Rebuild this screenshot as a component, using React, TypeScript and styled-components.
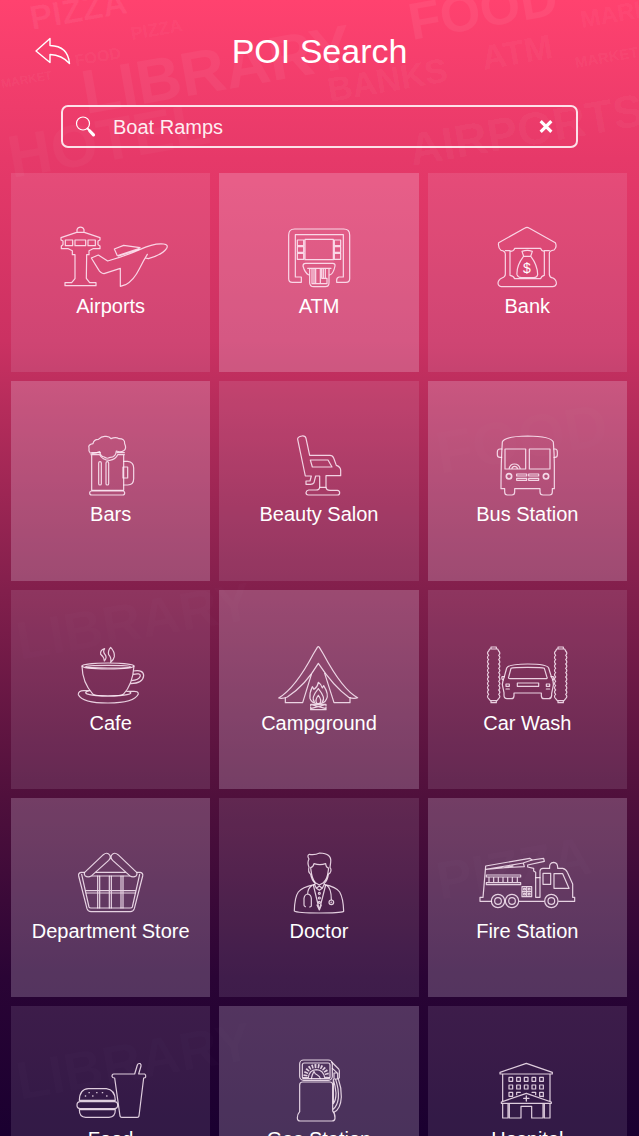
import React, { useState } from 'react';
import styled, { createGlobalStyle } from 'styled-components';

const GlobalStyle = createGlobalStyle`
  * { box-sizing: border-box; }
  body {
    margin: 0;
    background: #1c0030;
    color: #fff;
    font-family: "Liberation Sans", Arial, Helvetica, sans-serif;
  }
`;

const Screen = styled.div`
  position: relative;
  display: flex;
  flex-direction: column;
  height: 100vh;
  overflow: hidden;
  background: linear-gradient(
    180deg,
    #ff426f 0%,
    #e63969 14%,
    #cb3162 30%,
    #b52c5b 36%,
    #821f4c 52%,
    #50103c 70%,
    #2a0435 86%,
    #1a0030 100%
  );
`;

const Watermark = styled.svg`
  position: absolute;
  inset: 0;
  width: 100%;
  height: 100%;
  pointer-events: none;
  fill: #fff;
  font-family: "Liberation Sans", Arial, sans-serif;
  font-weight: 700;
`;

const Header = styled.header`
  position: relative;
  display: grid;
  grid-template-columns: 72px 1fr 72px;
  align-items: center;
  padding-top: 31px;
`;

const BackButton = styled.button`
  display: flex;
  justify-content: flex-end;
  padding: 0;
  border: 0;
  background: none;
  color: inherit;
  cursor: pointer;
`;

const Title = styled.h1`
  margin: 0;
  font-size: 34px;
  line-height: 40px;
  font-weight: 400;
  text-align: center;
`;

const SearchBox = styled.form`
  position: relative;
  flex: none;
  display: flex;
  align-items: center;
  height: 43px;
  margin: 34px 61px 25px;
  padding: 0 23px 0 12px;
  border: 2px solid rgba(255, 255, 255, 0.85);
  border-radius: 7px;
`;

const SearchLabel = styled.label`
  display: flex;
  width: 38px;
`;

const SearchInput = styled.input`
  flex: 1;
  min-width: 0;
  padding: 0;
  border: 0;
  outline: 0;
  background: none;
  color: rgba(255, 255, 255, 0.92);
  font: inherit;
  font-size: 20px;
  line-height: 24px;
`;

const ClearButton = styled.button`
  display: flex;
  padding: 0;
  border: 0;
  background: none;
  color: inherit;
  cursor: pointer;
`;

const Grid = styled.main`
  position: relative;
  flex: 1;
  min-height: 0;
  display: grid;
  grid-template-columns: repeat(3, 1fr);
  align-content: start;
  gap: 9px;
  padding: 0 12px 9px 11px;
  overflow-y: auto;
  scrollbar-width: none;
`;

const Tile = styled.button<{ $light: boolean }>`
  display: flex;
  flex-direction: column;
  align-items: center;
  justify-content: flex-start;
  gap: 5px;
  aspect-ratio: 1;
  padding: 52px 0 0;
  border: 0;
  background: rgba(250, 236, 255, ${(p) => (p.$light ? 0.21 : 0.11)});
  color: inherit;
  font: inherit;
  font-size: 20px;
  line-height: 24px;
  white-space: nowrap;
  cursor: pointer;
`;

const TileIcon = styled.svg`
  flex: none;
  width: 120px;
  height: 64px;
  overflow: visible;
  fill: none;
  stroke: rgba(255, 240, 250, 0.84);
  stroke-width: 3.6;
  stroke-linejoin: round;
  stroke-linecap: round;
`;

const LineIcon = styled.svg`
  display: block;
  fill: none;
  stroke: currentColor;
  stroke-linejoin: round;
  stroke-linecap: round;
`;

const brush = (x: number) => {
  const left = 'q-7 -7 0 -13'.concat(' q-7 -7 0 -13'.repeat(10));
  const right = 'q7 7 0 13'.concat(' q7 7 0 13'.repeat(10));
  return `M${x + 8} 41 H${x + 32} L${x + 35} 47 ${right} L${x + 30} 196 H${x + 10} L${x + 5} 190 ${left} Z M${x + 12} 41 V35 H${x + 28} V41 M${x + 12} 196 V202 H${x + 28} V196`;
};

type Place = { name: string; x: number; y: number; art: React.ReactNode };

const places: Place[] = [
  {
    name: 'Airports', x: 122, y: 45,
    art: (
      <>
        <path d="M200 67 V59 A11 11 0 0 1 221 59 V67 M152 83 L199 67 H222 L269 83 V90 L263 93 V104 L269 108 V116 H248 L236 122 V134 H229 L228 205 L238 218 H257 V227 H164 V218 H184 L194 206 V134 H186 V122 L174 116 H153 V108 L158 104 V93 L152 90 Z" />
        <path d="M165 90 h22 v17 h-22z M194 90 h32 v17 h-32z M233 90 h22 v17 h-22z" />
        <path d="M243 144 L264 135 L292 153 Q345 138 388 119 Q430 99 460 102 Q475 104 469 115 Q456 134 414 146 L405 144 M411 133 Q400 150 388 175 Q370 212 346 224 L330 229 V175 L281 191 Q270 190 264 178 L243 144 M321 137 L312 117 L340 106 L389 113" />
        <path d="M325 137 L386 117" strokeWidth="6" />
      </>
    ),
  },
  {
    name: 'ATM', x: 120, y: 45,
    art: (
      <>
        <path d="M247 201 H229 V74 H373 V201 H360 Q353 203 353 210 V217 H381 Q392 217 392 206 V75 Q392 57 374 57 H227 Q209 57 209 75 V206 Q209 217 220 217 H247 Z" />
        <path d="M258 88 H343 V149 H258 Z M235 90 h19 v17 h-19z M235 110 h19 v17 h-19z M235 130 h19 v18 h-19z M346 90 h19 v17 h-19z M346 110 h19 v17 h-19z M346 130 h19 v18 h-19z" />
        <path d="M270 195 Q258 190 252 168 Q252 160 260 160 H341 Q349 160 348 168 Q343 192 332 195 M266 175 H336 M272 175 V219 Q273 230 284 230 H319 Q330 230 330 219 V175 M279 175 V221 H324 V205 M285 175 V219 M290 175 V219 M304 175 V220 M308 175 V205 H324 M313 175 V203 M319 175 V203" />
      </>
    ),
  },
  {
    name: 'Bank', x: 745, y: 45,
    art: (
      <>
        <path d="M840 98 L919 54 Q925 50 931 54 L1010 98 Q1016 112 1006 120 Q992 122 992 130 V194 Q993 203 1003 204 Q1014 210 1013 222 Q1010 230 1002 230 H848 Q838 228 838 219 Q839 209 850 204 Q860 201 860 193 V132 Q859 122 847 121 Q837 112 840 98 Z" />
        <path d="M888 115 H966 Q968 123 977 124 V196 Q968 198 966 206 H888 Q885 198 874 196 V124 Q886 124 888 115 Z M992 122 H977 M860 122 H874" />
        <path d="M910 124 Q926 118 941 124 L936 139 H915 Z M914 140 Q893 168 895 194 Q898 203 908 203 H945 Q956 202 957 193 Q956 165 937 140" />
        <text x="925" y="188" textAnchor="middle" fontSize="42" fill="#fff" stroke="none">$</text>
      </>
    ),
  },
  {
    name: 'Bars', x: -58, y: 25,
    art: (
      <>
        <path d="M60 85 Q54 78 56 70 Q52 60 68 57 Q70 44 84 44 Q94 34 105 35 Q117 34 122 42 Q136 36 146 42 Q164 42 163 57 Q170 72 160 78 Q150 84 138 79 Q136 98 120 98 Q110 104 102 97 Q90 96 88 81 Q72 88 60 85 Z" />
        <path d="M64 90 V197 H160 V90 M62 90 H88 Q96 106 118 107 Q136 104 142 90 H162 M64 84 H90 M140 84 H162" />
        <rect x="58" y="199" width="105" height="12" rx="6" />
        <path d="M160 110 H172 Q190 112 190 130 V162 Q190 180 172 181 H160 M158 127 H172 V160 H158 Z" />
        <rect x="85" y="111" width="8" height="70" rx="4" />
        <rect x="107" y="111" width="8" height="70" rx="4" />
      </>
    ),
  },
  {
    name: 'Beauty Salon', x: 567, y: 25,
    art: (
      <>
        <path d="M683 44 Q682 36 696 34 Q706 33 708 41 L719 92 H780 Q788 92 791 100 L799 122 Q811 126 812 136 V153 H768 V186 Q768 197 780 197 H802 Q809 198 809 204 Q809 211 802 211 H715 Q708 210 708 204 Q709 197 716 196 H738 Q749 196 749 186 V154 H737 L732 174 Q729 179 722 179 H708 V169 H720 L724 154 H706 Z" />
        <path d="M721 106 H774 L786 127 H727 Z M749 188 H768" />
      </>
    ),
  },
  {
    name: 'Bus Station', x: -8, y: 25,
    art: (
      <>
        <path d="M98 52 Q104 35 174 34 Q244 35 251 52 Q254 90 254 120 V192 H248 V202 Q248 211 240 211 H220 Q211 211 211 202 V192 H135 V202 Q135 211 127 211 H113 Q105 211 105 202 V192 H94 Q94 110 98 52 Z" />
        <path d="M97 73 H91 Q83 73 83 82 V90 Q83 98 91 98 H96 M252 73 H256 Q263 73 263 82 V90 Q263 98 256 98 H253 M106 73 H168 V133 H106 Z M179 73 H241 V133 H179 Z M118 133 Q121 118 134 118 Q148 118 152 133 M126 133 Q128 125 135 125 Q142 125 144 133" />
        <circle cx="118" cy="155" r="8" strokeWidth="5" />
        <circle cx="229" cy="155" r="8" strokeWidth="5" />
        <path d="M141 148h30v6h-30z M177 148h30v6h-30z M141 161h30v6h-30z M177 161h30v6h-30z" />
      </>
    ),
  },
  {
    name: 'Cafe', x: -28, y: 20,
    art: (
      <>
        <ellipse cx="143" cy="92" rx="78" ry="9" />
        <ellipse cx="143" cy="94" rx="67" ry="4" />
        <path d="M65 92 Q66 142 98 177 Q105 182 143 182 Q183 182 189 177 Q217 148 221 92 M219 107 Q250 102 250 121 Q248 144 211 145 M218 117 Q241 112 240 122 Q236 134 213 136" />
        <path d="M88 166 H70 Q53 166 54 178 Q66 203 143 203 Q222 203 234 176 Q234 167 218 168 H199 M88 166 Q64 172 88 178 Q100 182 143 182 Q186 182 200 178 Q220 174 205 168" />
        <path d="M133 40 Q119 44 121 57 Q131 65 132 77 Q142 66 133 56 Q127 49 133 40 Z M151 36 Q164 50 162 64 Q160 74 151 81 Q154 68 145 58 Q142 46 151 36 Z" />
      </>
    ),
  },
  {
    name: 'Campground', x: 597, y: 20,
    art: (
      <>
        <path d="M772 36 Q775 32 778 36 L790 56 Q848 164 893 187 Q882 192 866 186 Q820 152 775 84 Q736 150 682 185 Q668 191 656 188 Q706 158 760 56 Z" />
        <path d="M754 118 L728 202 H676 V188 M794 114 L822 202 H870 V187" />
        <path d="M775 141 Q785 148 787 158 L791 151 Q808 178 799 192 Q794 205 775 205 Q754 204 750 189 Q748 172 757 154 L762 162 Q773 154 775 141 Z M775 160 Q798 188 787 200 M775 160 Q752 188 763 200 M775 180 Q786 194 780 203 M775 180 Q764 194 770 203" />
        <path d="M752 207 L798 220 M798 207 L752 220 M752 207 H798 V212 M752 212 V207 M752 216 V223 H798 V216" />
      </>
    ),
  },
  {
    name: 'Car Wash', x: -8, y: 20,
    art: (
      <>
        <path d={brush(52)} />
        <path d={brush(253)} />
        <path d="M111 98 Q116 86 174 86 Q232 86 237 98 L245 124 Q252 134 251 150 L246 174 V180 Q245 190 237 190 H223 Q215 190 215 181 V173 H133 V181 Q133 190 125 190 H112 Q103 190 103 180 V172 L98 148 Q99 136 104 124 Z" />
        <path d="M124 99 Q130 96 174 96 Q218 96 224 99 L232 126 Q234 130 228 130 H121 Q115 130 117 125 Z M104 124 H97 Q95 132 101 134 M244 124 H251 Q255 132 248 134 M143 143 h64 v10 h-64z M109 146 h10 v7 h-10z M230 146 h10 v7 h-10z M109 161 h10 M230 161 h10" />
      </>
    ),
  },
  {
    name: 'Department Store', x: 92, y: 15,
    art: (
      <>
        <path d="M193 82 L249 29 Q260 20 268 30 Q273 38 265 46 L214 92 Q203 99 194 92 Q190 87 193 82 Z M349 82 L293 29 Q282 20 274 30 Q269 38 277 46 L328 92 Q339 99 348 92 Q352 87 349 82 Z" />
        <path d="M192 82 H182 Q173 84 175 93 L200 191 Q203 200 212 200 H330 Q339 200 342 191 L367 93 Q369 84 360 82 H350 M184 88 L206 186 Q207 189 212 189 H330 Q335 189 336 186 L358 88 M227 82 H315 M215 93 H327" />
        <path d="M232 93 V189 M238 93 V189 M267 93 V189 M273 93 V189 M302 93 V189 M308 93 V189 M197 137 H345 M198 144 H344" />
      </>
    ),
  },
  {
    name: 'Doctor', x: 717, y: 15,
    art: (
      <>
        <path d="M867 67 Q861 52 867 42 Q860 32 868 28 Q884 31 899 24 Q936 25 932 52 L930 67 Q936 74 930 84 L925 88 Q923 106 912 116 L914 119 Q948 126 959 141 Q970 160 971 199 Q960 204 897 204 Q832 204 823 198 Q824 156 835 141 Q846 127 882 119 L886 116 Q875 105 872 88 Q863 80 867 67 Z" />
        <path d="M873 76 L872 68 Q880 66 882 56 Q900 62 917 56 Q918 68 926 69 L924 82 Q922 102 910 113 L898 120 L886 113 Q876 102 873 76 Z" />
        <path d="M880 120 L898 195 L917 120 M884 119 L889 130 L898 123 L907 130 L912 119 M889 130 L898 136 L907 130 M891 180 L898 195 L904 180" />
        <path d="M875 122 Q863 130 863 147 M856 185 Q851 183 852 178 V160 Q854 148 863 147 Q873 149 874 160 V180 Q875 185 869 186 M920 121 Q934 130 934 164" />
        <circle cx="934" cy="172" r="7" />
        <circle cx="934" cy="172" r="1" />
        <circle cx="898" cy="145" r="3" />
        <circle cx="898" cy="159" r="3" />
        <circle cx="898" cy="172" r="3" />
      </>
    ),
  },
  {
    name: 'Fire Station', x: -8, y: 15,
    art: (
      <>
        <path d="M66 169 H31 V157 H40 L46 88 L48 63 L180 40 L187 45 L222 40 L224 49 L174 60 V66 L192 70 V78 L198 82 V157 H211 V79 Q211 70 220 70 H240 Q238 53 252 52 Q265 53 264 70 H279 Q289 72 293 82 L309 117 V157 H315 V169 H267 M223 169 H149" />
        <path d="M49 73 L161 54 L164 65 L105 68 L130 63 M49 73 L105 68 M187 45 L160 54 M50 90 H153 V96 H50 Z M50 113 H153 V119 H50 Z M58 96 V113 M72 96 V113 M86 96 V113 M100 96 V113 M114 96 V113 M128 96 V113 M143 96 V113 M198 98 H211 M157 125 H186 V155 H157 Z M171 125 V155 M157 140 H186 M162 130h5v5h-5z M176 130h5v5h-5z M162 145h5v5h-5z M176 145h5v5h-5z M220 85 H243 V118 H220 Z M253 86 H279 L298 130 H253 Z" />
        {[85, 127, 245].map((cx) => (
          <g key={cx}>
            <circle cx={cx} cy="168" r="20" />
            <circle cx={cx} cy="168" r="10" />
          </g>
        ))}
      </>
    ),
  },
  {
    name: 'Food', x: -28, y: 55,
    art: (
      <>
        <path d="M160 103 H223 L231 76 Q233 70 240 72 Q243 74 242 79 L235 103 H253 Q257 105 256 112 Q255 115 250 115 L236 229 Q235 233 231 233 H184 Q180 233 179 229 L163 115 Q156 115 155 110 Q155 103 160 103 Z" />
        <path d="M57 182 Q58 148 84 147 H138 Q164 150 165 182 Z M57 210 H165 Q165 232 146 233 H76 Q57 232 57 210 Z" />
        <rect x="50" y="186" width="122" height="21" rx="10" />
        <path d="M75 169 h1 M86 159 h1 M97 169 h1 M109 159 h1 M126 159 h1 M139 169 h1" strokeWidth="4" />
      </>
    ),
  },
  {
    name: 'Gas Station', x: 597, y: 55,
    art: (
      <>
        <rect x="719" y="61" width="98" height="61" rx="12" />
        <rect x="727" y="70" width="83" height="47" rx="6" />
        <path d="M736 110 Q740 80 769 79 Q798 80 802 110" strokeWidth="12" strokeDasharray="5 4" strokeLinecap="butt" />
        <path d="M730 114 H745 Q748 91 769 90 Q790 91 794 114 H808 M754 117 Q756 105 762 95 Q764 103 772 106 Q780 110 781 117" />
        <path d="M728 127 H810 Q818 127 818 136 V214 Q826 222 825 236 Q824 244 816 244 H721 Q712 244 712 234 Q712 224 719 216 V136 Q719 127 728 127 Z" />
        <path d="M815 67 L836 88 Q839 92 838 98 V114 L835 118 Q845 145 844 172 Q842 208 822 218 M817 86 L830 98 M822 100 H833 V118 H822 Z M827 120 Q837 148 835 176 Q832 198 820 208 M820 120 V192 Q828 182 828 160 Q826 138 820 120" />
      </>
    ),
  },
  {
    name: 'Hospital', x: -38, y: 55,
    art: (
      <>
        <path d="M61 98 L140 71 L218 98 V103 H61 Z M69 103 V185 M211 103 V185 M65 187 L140 161 L215 187 V191 H65 Z M69 191 V235 H85 V191 M89 191 V235 H124 V200 H156 V235 H190 V191 M194 191 V235 H211 V191" />
        <path d="M140 169 V184 M132 176 H148" strokeWidth="4" />
        {[88, 111, 134, 157, 180].map((x) => (
          <path key={x} d={`M${x} 113h11v12h-11z M${x} 136h11v12h-11z`} />
        ))}
        <path d="M88 170 V158 H99 V169 M111 165 V158 H122 M157 158 H168 V165 M180 169 V158 H191 V171 M88 170 H99 M180 170 H191" />
      </>
    ),
  },
];

type Word = [text: string, x: number, y: number, size: number, opacity: number];

const words: Word[] = [
  ['PIZZA', 32, 30, 34, 0.06],
  ['PIZZA', 132, 40, 18, 0.05],
  ['FOOD', 76, 66, 16, 0.05],
  ['MARKET', 2, 88, 12, 0.05],
  ['LIBRARY', 86, 114, 62, 0.05],
  ['FOOD', 412, 40, 52, 0.06],
  ['ATM', 484, 70, 34, 0.05],
  ['BANKS', 330, 102, 34, 0.05],
  ['MARKET', 582, 28, 24, 0.05],
  ['MARKET', 576, 68, 15, 0.05],
  ['HOTEL', 12, 178, 60, 0.03],
  ['AIRPORTS', 412, 166, 46, 0.04],
  ['NIGHTLIFE', 86, 366, 40, 0.02],
  ['LIBRARY', 20, 660, 54, 0.01],
  ['FOOD', 440, 474, 60, 0.01],
  ['PIZZA', 440, 900, 54, 0.01],
  ['LIBRARY', 20, 1100, 54, 0.01],
];

export default function App() {
  const [query, setQuery] = useState('Boat Ramps');

  return (
    <>
      <GlobalStyle />
      <Screen>
        <Watermark viewBox="0 0 639 1136" preserveAspectRatio="xMidYMin slice" aria-hidden="true">
          {words.map(([text, x, y, size, opacity]) => (
            <text
              key={`${text}-${x}-${y}`}
              fontSize={size}
              fillOpacity={opacity}
              transform={`translate(${x} ${y}) rotate(-10)`}
            >
              {text}
            </text>
          ))}
        </Watermark>

        <Header>
          <BackButton type="button" aria-label="Back">
            <LineIcon width="38" height="30" viewBox="34 36 38 30" strokeWidth="1.4">
              <path d="M36 51 L50 38.500 V45.500 Q68 46 69.500 63.500 Q62 55 50 54.500 V62.500 Z" />
            </LineIcon>
          </BackButton>
          <Title>POI Search</Title>
        </Header>

        <SearchBox role="search" onSubmit={(e) => e.preventDefault()}>
          <SearchLabel htmlFor="poi-query" aria-label="Search places">
            <LineIcon width="22" height="22" viewBox="0 0 22 22">
              <circle cx="8" cy="7.500" r="6.500" strokeWidth="1.200" />
              <path d="M12.500 12.500 L14.500 14.500" strokeWidth="2" />
              <path d="M14.800 15 L18.500 18.800" strokeWidth="3.200" />
            </LineIcon>
          </SearchLabel>
          <SearchInput id="poi-query" type="text" value={query} onChange={(e) => setQuery(e.target.value)} />
          <ClearButton type="button" aria-label="Clear" onClick={() => setQuery('')}>
            <LineIcon width="14" height="14" viewBox="0 0 14 14" strokeWidth="3.200" style={undefined}>
              <path d="M2.800 2.300 L11.200 10.700 M11.200 2.300 L2.800 10.700" strokeLinecap="square" />
            </LineIcon>
          </ClearButton>
        </SearchBox>

        <Grid>
          {places.map((place, i) => (
            <Tile key={place.name} type="button" $light={i % 2 === 1}>
              <TileIcon viewBox={`${place.x} ${place.y} 360 192`} aria-hidden="true">
                {place.art}
              </TileIcon>
              <span>{place.name}</span>
            </Tile>
          ))}
        </Grid>
      </Screen>
    </>
  );
}
